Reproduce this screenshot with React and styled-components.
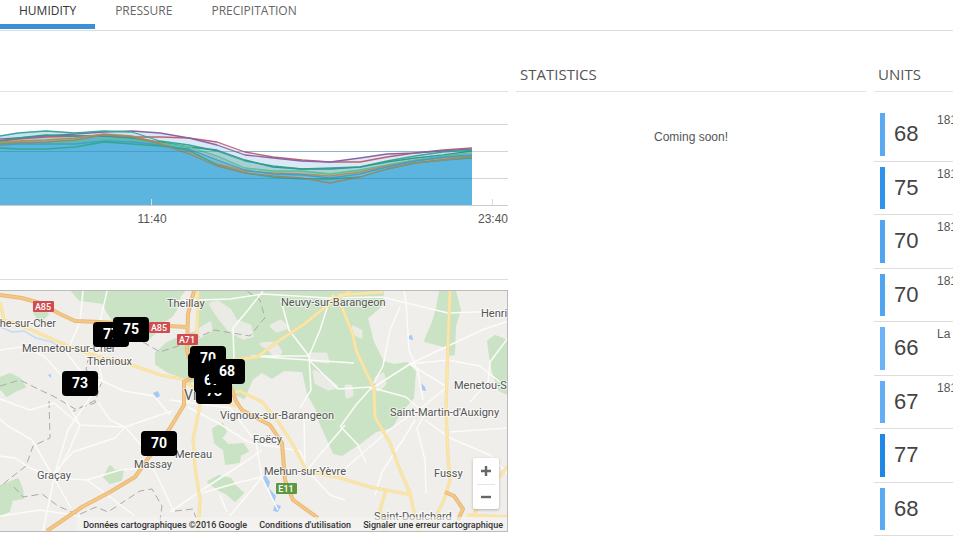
import React, {useState} from 'react'
import styled, {createGlobalStyle} from 'styled-components'

const GlobalStyle = createGlobalStyle`
    * {
        box-sizing: border-box;
    }
    body {
        margin: 0;
        background: #fff;
        color: #555;
        font-family: "Liberation Sans", Arial, sans-serif;
        font-size: 12px;
        overflow: hidden;
    }
`;

const Page = styled.div`
    display: flex;
    flex-direction: column;
    min-height: 100vh;
`;

const Tabs = styled.nav`
    display: flex;
    gap: 1px;
    height: 31px;
    border-bottom: 1px solid #ddd;
`;

const Tab = styled.button`
    height: 29px;
    padding: 0 19px 3px;
    border: 0;
    border-bottom: 5px solid ${props => props.$active ? '#3b8fd2' : 'transparent'};
    background: none;
    color: ${props => props.$active ? '#333' : '#666'};
    font-family: "Open Sans", sans-serif;
    font-size: 12px;
    line-height: 16px;
    text-transform: uppercase;
    cursor: pointer;
`;

const Columns = styled.main`
    flex: 1;
    display: grid;
    grid-template-columns: 508fr 350fr 79fr;
    column-gap: 8px;
`;

const Column = styled.section`
    display: flex;
    flex-direction: column;
    min-width: 0;
`;

const Header = styled.header`
    height: 61px;
    padding: 32px 4px 0;
    border-bottom: 1px solid #e2e2e2;
`;

const H2 = styled.h2`
    margin: 0;
    color: #555;
    font-family: "Open Sans", sans-serif;
    font-size: 15px;
    font-weight: 400;
    line-height: 22px;
    text-transform: uppercase;
`;

const ChartBox = styled.div`
    padding-bottom: 43px;
    border-bottom: 1px solid #ddd;

    svg {
        display: block;
        width: 100%;
    }
    text {
        fill: #555;
        font-size: 12px;
        text-anchor: middle;
    }
`;

const Message = styled.p`
    margin: 36px 0 0;
    line-height: 18px;
    text-align: center;
`;

const UnitList = styled.ul`
    flex: 1;
    display: flex;
    flex-direction: column;
    margin: 16px 0 0;
    padding: 0;
    list-style: none;
`;

const UnitRow = styled.li`
    flex: 1;
    display: flex;
    padding: 5px 0 5px 6px;
    border-bottom: 1px solid #ddd;
    overflow: hidden;
`;

const Bar = styled.span`
    flex: none;
    width: 5px;
    background: ${props => props.$color};
`;

const Value = styled.span`
    flex: none;
    width: 52px;
    padding-left: 9px;
    align-self: center;
    color: #444;
    font-size: 22px;
    line-height: 26px;
`;

const UnitName = styled.span`
    line-height: 14px;
    white-space: nowrap;
`;

const MapBox = styled.div`
    position: relative;
    height: 242px;
    margin-top: 10px;
    border: 1px solid #bbb;
    border-left: 0;
    background: #efeeea;
    overflow: hidden;
    font-family: Roboto, sans-serif;
`;

const MapSvg = styled.svg`
    display: block;
    width: 100%;
    height: 100%;

    text {
        fill: #555;
        font-size: 11px;
        stroke: #fff;
        stroke-opacity: 0.6;
        stroke-width: 2px;
        paint-order: stroke;
    }
`;

const Marker = styled.span`
    position: absolute;
    left: ${props => props.$x}px;
    top: ${props => props.$y}px;
    width: 36px;
    height: 25px;
    border-radius: 4px;
    background: #000;
    color: #fff;
    font-size: 14px;
    font-weight: 700;
    line-height: 25px;
    text-align: center;
`;

const ZoomBox = styled.div`
    position: absolute;
    right: 8px;
    bottom: 22px;
    width: 26px;
    padding: 0 4px;
    border-radius: 2px;
    background: #fff;
    box-shadow: 0 1px 3px rgba(0,0,0,0.25);
`;

const ZoomButton = styled.button`
    display: flex;
    align-items: center;
    justify-content: center;
    width: 100%;
    height: 26px;
    padding: 0;
    border: 0;
    background: none;
    cursor: pointer;

    & + & {
        height: 25px;
        border-top: 1px solid #e4e4e4;
    }
`;

const Credits = styled.div`
    position: absolute;
    right: 0;
    bottom: 0;
    display: flex;
    gap: 12px;
    height: 14px;
    padding: 0 4px 0 6px;
    background: rgba(245,245,245,0.6);
    color: #333;
    font-size: 9px;
    font-weight: 500;
    line-height: 17px;
    white-space: nowrap;
`;

const A = styled.a`
    color: inherit;
    text-decoration: none;
`;

const tabs = ['Humidity', 'Pressure', 'Precipitation'];

const units = [
    {value: 68, name: '181', color: '#5aaaf3'},
    {value: 75, name: '181', color: '#2f93ec'},
    {value: 70, name: '181', color: '#51a4f0'},
    {value: 70, name: '181', color: '#51a4f0'},
    {value: 66, name: 'La', color: '#6bb2f7'},
    {value: 67, name: '181', color: '#62adf3'},
    {value: 77, name: '', color: '#1f87e5'},
    {value: 68, name: '', color: '#5aaaf3'},
];

const times = [0, 18, 46, 75, 104, 132, 160, 189, 217, 245, 273, 302, 330, 360, 387, 415, 443, 472];

// one value per entry in times, highest series first
const series = [
    {line: '#c0606f', fill: '#e4e8f6', values: [141, 139, 137, 136, 136, 137, 137, 138, 142, 152, 157, 160, 162, 162, 157, 153, 150, 148]},
    {line: '#8765a8', fill: '#dbe9f6', values: [139, 138, 136, 134, 132, 131, 133, 138, 145, 155, 158, 161, 162, 158, 154, 153, 151, 149]},
    {line: '#3ba79a', fill: '#c8e2f0', values: [136, 133, 131, 133, 131, 132, 141, 145, 151, 161, 166, 169, 168, 167, 161, 156, 152, 150]},
    {line: '#329a8c', fill: '#a6d0d6', values: [141, 138, 135, 136, 136, 138, 142, 147, 150, 160, 167, 169, 169, 167, 162, 158, 155, 151]},
    {line: '#5cbf92', fill: '#94c4c6', values: [143, 142, 143, 142, 139, 140, 143, 147, 156, 168, 171, 171, 174, 170, 165, 160, 156, 153]},
    {line: '#b0905f', fill: '#8fb9b5', values: [142, 141, 140, 138, 134, 136, 143, 152, 164, 171, 173, 174, 176, 172, 166, 161, 158, 156]},
    {line: '#459dc8', fill: '#75bcd8', values: [145, 144, 144, 144, 141, 142, 145, 149, 160, 170, 174, 175, 178, 174, 167, 161, 157, 155]},
    {line: '#35a98f', fill: '#5bb5de', values: [148, 149, 149, 147, 142, 144, 146, 150, 165, 173, 177, 179, 179, 177, 169, 163, 160, 158]},
    {line: '#948a70', fill: '#5bb5de', values: [144, 143, 142, 140, 135, 137, 144, 154, 166, 173, 176, 178, 183, 177, 169, 163, 160, 157]},
];

const linePath = (values) => values.map((v, i) => `${i ? 'L' : 'M'}${times[i]} ${v}`).join(' ');

const forests = [
    'M72 291 L80 300 103 303 108 313 120 330 147 340 155 333 160 324 172 316 177 308 180 296 184 291Z',
    'M180 337 L166 344 156 353 156 364 168 372 180 376 186 384 196 380 200 391 229 391 244 398 252 379 262 372 272 378 284 370 303 371 308 394 316 408 320 422 328 440 334 453 342 455 360 443 376 431 392 427 400 412 413 398 415 372 407 363 394 365 383 362 373 342 367 318 382 305 383 291 200 291 200 325 196 332Z',
    'M440 291 L437 308 433 322 425 341 447 347 449 355 454 354 455 326 460 310 455 291Z',
    'M508 341 L495 336 488 341 490 356 493 372 499 390 508 394Z',
    'M0 486 L9 483 18 479 22 489 23 498 12 500 9 511 0 515Z',
    'M0 378 L10 374 20 379 25 387 17 390 7 396 0 388Z',
    'M34 313 L43 309 48 314 40 322Z',
    'M104 477 L110 466 115 471 123 470 121 480 110 483Z',
    'M213 429 L223 424 226 432 221 438 228 445 243 444 248 451 240 455 239 462 226 464 224 450 215 443Z',
    'M208 482 L219 476 231 479 235 486 243 493 235 501 226 493 219 490Z',
];

const clearings = [
    'M210 304 L218 302 230 310 236 321 250 326 252 336 243 338 230 331 220 319Z',
    'M271 326 L280 321 288 327 277 331Z',
    'M261 344 L275 343 281 352 276 357 269 349Z',
    'M310 354 L326 354 328 362 311 360Z',
    'M197 331 L210 323 211 330 198 338Z',
    'M353 327 L361 331 361 337 353 333Z',
    'M376 378 L383 374 385 384 378 390Z',
    'M346 386 L351 386 352 395 347 397Z',
    'M314 371 L325 377 337 387 328 389 316 383Z',
];

const lakes = [
    'M153 393 L158 391 160 396 156 398Z',
    'M48 375 L51 374 51 378Z',
    'M408 336 L412 335 413 340 409 339Z',
    'M421 383 L425 387 426 391 422 390Z',
    'M265 474 L270 482 268 489 263 478Z',
    'M269 488 L276 496 274 504Z',
    'M275 504 L281 506 278 512 273 511Z',
    'M257 441 L261 442 259 446Z',
];

const minorRoads = [
    'M83 291 L80 322 70 345 64 350 84 375',
    'M107 291 L100 322 98 357 102 380 68 430 58 463 54 478',
    'M0 350 L22 347 44 356 70 385 100 380 124 391 154 396 170 415',
    'M0 419 L8 426 32 440 54 478 43 531',
    'M0 456 L15 458 30 468 54 478 87 480 120 470 170 466',
    'M0 399 L30 410 54 403 80 425 125 427 172 411',
    'M65 400 L80 425 68 453 54 478 71 508',
    'M98 402 L110 420 125 427 115 438 73 452 54 473',
    'M125 427 L141 445 160 482 174 512',
    'M87 480 L110 497 135 516',
    'M0 516 L40 510 80 516',
    'M170 301 L230 299 263 294 328 298 382 297 448 313 508 311',
    'M263 291 L248 310 233 328 234 361',
    'M281 300 L289 330 309 356 252 356 308 360 354 363',
    'M328 305 L320 330 309 356 311 390 300 408',
    'M309 360 L338 389 372 387',
    'M404 291 L406 302 409 350 418 372 423 400',
    'M400 307 L390 330 383 366 371 388',
    'M371 389 L410 364 450 345 482 330 508 321',
    'M508 338 L490 362 488 382 470 402',
    'M410 364 L447 387 425 405 389 430 340 473',
    'M373 388 L406 397 425 414 417 428 425 460 426 493',
    'M410 364 L448 360 480 366 500 382',
    'M415 420 L404 438 382 472 375 495',
    'M425 420 L450 438 490 455 508 474',
    'M450 432 L508 428',
    'M340 427 L356 405 371 388',
    'M341 427 L358 445 366 463',
    'M170 400 L230 408 256 442 262 478 278 510',
    'M188 407 L220 424 248 442 300 451 307 470 330 495 345 500',
    'M202 493 L240 482 262 477 230 516',
    'M170 512 L205 488 245 462 262 450',
    'M304 415 L305 470',
    'M307 470 L345 425',
    'M209 388 L217 400 242 405',
    'M220 495 L227 512',
];

const yellowRoads = [
    'M0 302 L4 320 20 325 43 335 70 347 100 357 132 365 160 375 182 379 200 392 225 401 236 406',
    'M198 291 L197 335 193 365 205 382 201 400 193 440 195 467 200 500 198 531',
    'M227 361 L257 357 280 340 303 325 328 305 350 291',
    'M332 295 L340 302 353 335 356 350 365 370 374 388 375 417 390 443 400 470 410 493 418 531',
    'M328 305 L340 295 383 292',
    'M450 291 L448 342 446 408 448 457 450 480 444 500 432 524',
    'M205 400 L240 391 262 402 277 420 292 443 307 471 340 478 370 487 412 495',
    'M386 490 L380 510 384 531',
    'M467 515 L508 517',
    'M474 517 L480 496 499 477 508 466',
];

const highways = [
    'M0 295 L22 298 40 303 60 314 75 321 100 322 130 324 187 327',
    'M194 291 L188 314 187 350 194 376 184 382 184 405 170 428 158 445 147 460 135 477 110 492 82 507 47 531',
    'M212 375 L230 385 236 401 242 410 270 425 282 443 285 480 293 500 318 518',
    'M445 492 L454 496 463 509 458 520',
];

const borders = [
    'M0 386 L20 380 40 390 55 397 75 409 95 403 102 380 86 370 88 360',
    'M49 401 L50 438 33 446 26 466 8 480 0 487',
    'M14 487 L23 497 42 494 58 506 78 515 96 507 108 512 140 491 152 489 162 506 160 520',
    'M65 400 L72 412 96 400',
    'M143 342 L160 352 184 344 214 330 250 336 262 321 265 318 260 300 247 291',
    'M175 511 L193 509 196 518',
];

const places = [
    [-6, 327, 'che-sur-Cher'],
    [22, 352, 'Mennetou-sur-Cher'],
    [87, 365, 'Thénioux'],
    [167, 307, 'Theillay'],
    [281, 306, 'Neuvy-sur-Barangeon'],
    [481, 317, 'Henrichemont'],
    [454, 389, 'Menetou-Salon'],
    [390, 416, "Saint-Martin-d'Auxigny"],
    [220, 419, 'Vignoux-sur-Barangeon'],
    [253, 443, 'Foëcy'],
    [175, 458, 'Mereau'],
    [134, 468, 'Massay'],
    [37, 479, 'Graçay'],
    [264, 475, 'Mehun-sur-Yèvre'],
    [434, 477, 'Fussy'],
    [374, 520, 'Saint-Doulchard'],
];

const shields = [
    {x: 33, y: 301, name: 'A85', color: '#cf4c50'},
    {x: 149, y: 322, name: 'A85', color: '#cf4c50'},
    {x: 177, y: 334, name: 'A71', color: '#cf4c50'},
    {x: 276, y: 483, name: 'E11', color: '#5b983f'},
];

// later markers lie over earlier ones
const markers = [
    {x: 93, y: 31, value: 77},
    {x: 113, y: 26, value: 75},
    {x: 62, y: 80, value: 73},
    {x: 141, y: 140, value: 70},
    {x: 188, y: 62, value: 66},
    {x: 190, y: 55, value: 70},
    {x: 196, y: 88, value: 73},
    {x: 194, y: 77, value: 67},
    {x: 209, y: 68, value: 68},
];

const Chart = () => (
    <ChartBox>
        <svg viewBox="0 92 508 144">
            <path d="M0 124.5 H508 M0 151.5 H508 M0 178.5 H508" stroke="#d5d5d5" />
            {series.map(s => <path key={s.line} d={`${linePath(s.values)} V206 H0Z`} fill={s.fill} />)}
            <g fill="none" strokeWidth="1.3" strokeLinejoin="round">
                {series.map(s => <path key={s.line} d={linePath(s.values)} stroke={s.line} />)}
            </g>
            <path d="M0 151.5 H472 M0 178.5 H472" stroke="#2d7fa8" strokeOpacity="0.4" />
            <path d="M0 205.5 H508" stroke="#ccc" />
            <path d="M151.5 199 V205 M492.5 199 V205" stroke="#d5dde4" />
            <text x="152" y="223">11:40</text>
            <text x="493" y="223">23:40</text>
        </svg>
    </ChartBox>
)

const Roads = ({paths, color, width, dash}) => (
    <g fill="none" stroke={color} strokeWidth={width} strokeDasharray={dash} strokeLinejoin="round">
        {paths.map(d => <path key={d} d={d} />)}
    </g>
)

const Map = () => (
    <MapBox>
        <MapSvg viewBox="0 291 508 240" preserveAspectRatio="xMinYMin slice">
            <g fill="#cbe3c5" stroke="#cbe3c5" strokeWidth="2" strokeLinejoin="round">{forests.map(d => <path key={d} d={d} />)}</g>
            <g fill="#ebebe5" stroke="#ebebe5" strokeWidth="3" strokeLinejoin="round">{clearings.map(d => <path key={d} d={d} />)}</g>
            <g fill="#a3c9f5">{lakes.map(d => <path key={d} d={d} />)}</g>
            <path d="M0 327 L12 332 24 331 36 338 52 342 66 353" fill="none" stroke="#c3dcf5" strokeWidth="1.5" />
            <Roads paths={borders} color="#aaa" width="1" dash="7 4" />
            <Roads paths={minorRoads} color="#fbfbf9" width="1.5" />
            <Roads paths={yellowRoads} color="#f5dd9f" width="3.2" />
            <Roads paths={yellowRoads} color="#fbe6a8" width="2" />
            <Roads paths={highways} color="#e8b878" width="4" />
            <Roads paths={highways} color="#f5c886" width="2" />
            {places.map(([x, y, name]) => <text key={name} x={x} y={y}>{name}</text>)}
            <text x="184" y="400" style={{fontSize: 14}}>Vierzon</text>
            {shields.map(s => (
                <g key={s.x}>
                    <rect x={s.x} y={s.y} width="21" height="11" rx="1" fill={s.color} />
                    <text x={s.x + 10} y={s.y + 9} textAnchor="middle" style={{fill: '#fff', stroke: 'none', fontSize: 9, fontWeight: 500}}>{s.name}</text>
                </g>
            ))}
        </MapSvg>
        {markers.map(m => <Marker key={`${m.x}-${m.y}`} $x={m.x} $y={m.y}>{m.value}</Marker>)}
        <ZoomBox>
            <ZoomButton aria-label="Zoom in">
                <svg width="10" height="10"><path d="M5 0 V10 M0 5 H10" stroke="#666" strokeWidth="2.4" /></svg>
            </ZoomButton>
            <ZoomButton aria-label="Zoom out">
                <svg width="10" height="10"><path d="M0 5 H10" stroke="#666" strokeWidth="2.4" /></svg>
            </ZoomButton>
        </ZoomBox>
        <Credits>
            <span>Données cartographiques ©2016 Google</span>
            <A href="#terms">Conditions d'utilisation</A>
            <A href="#report">Signaler une erreur cartographique</A>
        </Credits>
    </MapBox>
)

const App = () => {
    const [active, setActive] = useState('Humidity');

    return (
        <>
            <GlobalStyle />
            <Page>
                <Tabs>
                    {tabs.map(tab => (
                        <Tab key={tab} $active={tab === active} onClick={() => setActive(tab)}>{tab}</Tab>
                    ))}
                </Tabs>
                <Columns>
                    <Column>
                        <Header />
                        <Chart />
                        <Map />
                    </Column>
                    <Column>
                        <Header><H2>Statistics</H2></Header>
                        <Message>Coming soon!</Message>
                    </Column>
                    <Column>
                        <Header><H2>Units</H2></Header>
                        <UnitList>
                            {units.map((unit, i) => (
                                <UnitRow key={i}>
                                    <Bar $color={unit.color} />
                                    <Value>{unit.value}</Value>
                                    <UnitName>{unit.name}</UnitName>
                                </UnitRow>
                            ))}
                        </UnitList>
                    </Column>
                </Columns>
            </Page>
        </>
    )
}

export default App
